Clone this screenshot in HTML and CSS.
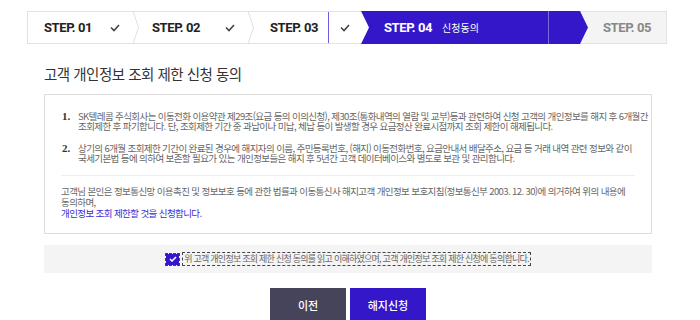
FILE: index.html
```html
<!DOCTYPE html>
<html lang="ko">
<head>
  <meta charset="UTF-8">
  <meta name="viewport" content="width=device-width, initial-scale=1.0">
  <title>고객 개인정보 조회 제한 신청 동의</title>
  <link rel="stylesheet" href="styles.css">
</head>
<body>
  <!-- 단계 표시 -->
  <div class="steps">
    <div class="step step-1">
      <span class="step-name">STEP. 01</span>
      <svg class="check" width="10" height="8" viewBox="0 0 10 8"><polyline points="1,3.5 4,6.5 9,1" /></svg>
    </div>
    <svg class="sep" width="6" height="33" viewBox="0 0 6 33"><polyline points="0,0 5.5,16.5 0,33" /></svg>
    <div class="step step-2">
      <span class="step-name">STEP. 02</span>
      <svg class="check" width="10" height="8" viewBox="0 0 10 8"><polyline points="1,3.5 4,6.5 9,1" /></svg>
    </div>
    <svg class="sep" width="6" height="33" viewBox="0 0 6 33"><polyline points="0,0 5.5,16.5 0,33" /></svg>
    <div class="step step-3">
      <span class="step-name">STEP. 03</span>
    </div>
    <div class="step step-3-check">
      <svg class="check" width="10" height="8" viewBox="0 0 10 8"><polyline points="1,3.5 4,6.5 9,1" /></svg>
    </div>
    <div class="step step-4">
      <span class="step-name">STEP. 04</span>
      <span class="step-sub">신청동의</span>
    </div>
    <div class="step step-5">
      <span class="step-name">STEP. 05</span>
    </div>
  </div>

  <main class="content">
    <h2 class="title">고객 개인정보 조회 제한 신청 동의</h2>

    <div class="terms">
      <ol class="terms-list">
        <li><b>1.</b><p>SK텔레콤 주식회사는 이동전화 이용약관 제29조(요금 등의 이의신청), 제30조(통화내역의 열람 및 교부)등과 관련하여 신청 고객의 개인정보를 해지 후 6개월간<br>조회제한 후 파기합니다. 단, 조회제한 기간 중 과납이나 미납, 체납 등이 발생할 경우 요금정산 완료시점까지 조회 제한이 해제됩니다.</p></li>
        <li><b>2.</b><p>상기의 6개월 조회제한 기간이 완료된 경우에 해지자의 이름, 주민등록번호, (해지) 이동전화번호, 요금안내서 배달주소, 요금 등 거래 내역 관련 정보와 같이<br>국세기본법 등에 의하여 보존할 필요가 있는 개인정보들은 해지 후 5년간 고객 데이터베이스와 별도로 보관 및 관리합니다.</p></li>
      </ol>
      <hr class="divider">
      <p class="notice">고객님 본인은 정보통신망 이용촉진 및 정보보호 등에 관한 법률과 이동통신사 해지고객 개인정보 보호지침(정보통신부 2003. 12. 30)에 의거하여 위의 내용에<br>동의하며,<br><span class="notice-em">개인정보 조회 제한할 것을 신청합니다.</span></p>
    </div>

    <div class="agree">
      <label class="agree-label">
        <span class="agree-box">
          <svg width="8" height="6" viewBox="0 0 8 6"><polyline points="1,3 3,5 7,1" /></svg>
        </span>
        <span class="agree-text">위 고객 개인정보 조회 제한 신청 동의를 읽고 이해하였으며, 고객 개인정보 조회 제한 신청에 동의합니다.</span>
      </label>
    </div>

    <div class="buttons">
      <button class="btn btn-prev">이전</button>
      <button class="btn btn-submit">해지신청</button>
    </div>
  </main>
</body>
</html>
```

FILE: styles.css
```css
/* 기본 */
body {
  margin: 0;
  padding: 11px 0 0;
  background: #ffffff;
  font-family: 'Noto Sans CJK KR', 'Noto Sans', sans-serif;
  color: #666;
}

/* 단계 표시 */
.steps {
  display: flex;
  margin-left: 27px;
  width: 640px;
  height: 33px;
  box-sizing: border-box;
  border: 1px solid #e2e2e2;
  border-right: none;
}

.step {
  display: flex;
  align-items: center;
  height: 100%;
  box-sizing: border-box;
  font-family: Roboto, 'Noto Sans', sans-serif;
}

.step-name {
  font-size: 13px;
  font-weight: bold;
  color: #222;
  letter-spacing: -0.4px;
}

.check {
  fill: none;
  stroke: #444;
  stroke-width: 1.6;
}

.sep {
  flex: none;
  margin-top: -1px;
  fill: none;
  stroke: #e0e0e0;
  stroke-width: 1;
}

.step-1 {
  width: 105px;
  padding-left: 16px;
}

.step-1 .check,
.step-2 .check {
  margin-left: auto;
  margin-right: 13px;
}

.step-2 {
  width: 109px;
  padding-left: 13px;
}

.step-3 {
  width: 75px;
  padding-left: 16px;
  border-right: 1px solid #6c5ce0;
}

.step-3-check {
  width: 32px;
  padding-left: 11px;
}

.step-4 {
  width: 227px;
  margin-top: -1px;
  height: 33px;
  padding-left: 23px;
  background: linear-gradient(to right, #3417c9 0, #3417c9 187px, #7b6cdb 187px, #7b6cdb 188px, #3417c9 188px);
  clip-path: polygon(0 0, 219px 0, 100% 50%, 219px 100%, 0 100%, 8px 50%);
  position: relative;
  z-index: 1;
}

.step-4 .step-name {
  color: #ffffff;
}

.step-sub {
  margin-left: 10px;
  font-family: 'Noto Sans CJK KR', sans-serif;
  font-size: 10px;
  color: #ffffff;
}

.step-5 {
  flex: 1;
  margin-left: -8px;
  margin-top: -1px;
  height: 33px;
  padding-left: 23px;
  background: #f4f4f4;
  border: 1px solid #e2e2e2;
  border-left: none;
}

.step-5 .step-name {
  color: #888;
}

/* 본문 */
.content {
  width: 608px;
  margin-left: 44px;
}

.title {
  margin: 20px 0 10px;
  font-size: 14.5px;
  font-weight: normal;
  line-height: 20px;
  color: #333;
  letter-spacing: -0.5px;
}

.terms {
  border: 1px solid #dddddd;
  padding: 16px 16px 14px;
}

.terms-list {
  list-style: none;
  margin: 0;
  padding: 0 0 0 1px;
}

.terms-list li {
  display: flex;
  margin-bottom: 12px;
}

.terms-list b {
  width: 16px;
  flex: none;
  font-family: 'Liberation Serif', serif;
  font-size: 11px;
  line-height: 10px;
  color: #333;
}

.terms-list p,
.notice {
  margin: 0;
  font-size: 9.5px;
  line-height: 10px;
  letter-spacing: -0.6px;
  white-space: nowrap;
  color: #666;
}

.divider {
  border: none;
  border-top: 1px solid #eeeeee;
  margin: 6px 0 10px;
}

.notice {
  line-height: 11px;
}

.notice-em {
  color: #3b2cd1;
}

/* 동의 체크 */
.agree {
  margin-top: 11px;
  height: 28px;
  background: #f4f4f4;
  display: flex;
  justify-content: center;
  align-items: center;
}

.agree-label {
  display: flex;
  align-items: center;
  gap: 4px;
}

.agree-box {
  width: 13px;
  height: 11px;
  background: #3417c9;
  outline: 1px dashed #444;
  display: flex;
  justify-content: center;
  align-items: center;
}

.agree-box svg {
  fill: none;
  stroke: #ffffff;
  stroke-width: 1.5;
}

.agree-text {
  font-size: 9px;
  letter-spacing: -0.75px;
  line-height: 12px;
  padding: 0 1px;
  color: #666;
  outline: 1px dashed #444;
  white-space: nowrap;
}

/* 버튼 */
.buttons {
  display: flex;
  justify-content: center;
  gap: 4px;
  margin-top: 15px;
}

.btn {
  width: 76px;
  height: 34px;
  border: none;
  font-family: 'Noto Sans CJK KR', sans-serif;
  font-size: 11px;
  font-weight: 500;
  color: #ffffff;
  cursor: pointer;
}

.btn-prev {
  background: #46445a;
}

.btn-submit {
  background: #3417c9;
}
```
